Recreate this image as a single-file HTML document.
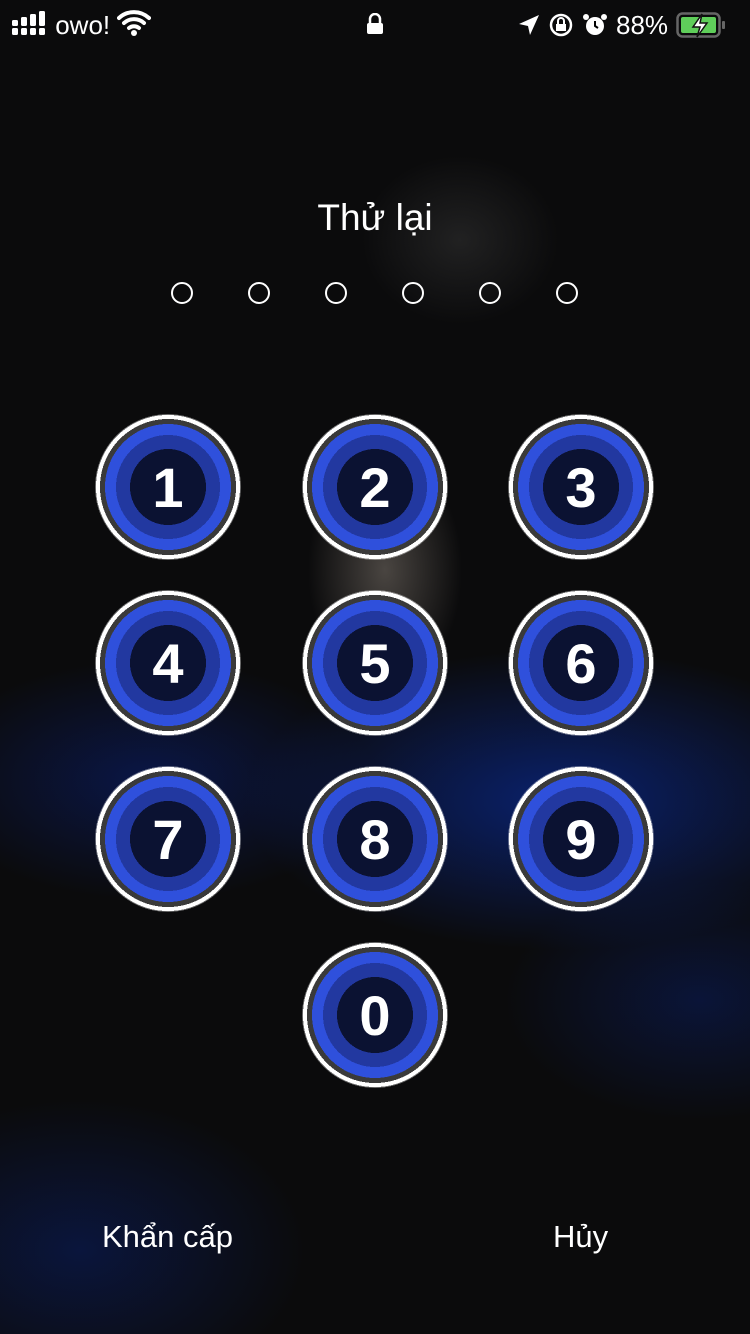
<!DOCTYPE html>
<html><head><meta charset="utf-8"><style>
body{margin:0;width:750px;height:1334px;overflow:hidden;font-family:"Liberation Sans",sans-serif;color:#fff;position:relative;
background:
radial-gradient(ellipse 110px 170px at 385px 570px,rgba(150,140,130,.45),transparent 70%),
radial-gradient(ellipse 140px 120px at 460px 240px,rgba(60,60,60,.45),transparent 70%),
radial-gradient(ellipse 420px 200px at 560px 800px,rgba(10,40,140,.75),transparent 75%),
radial-gradient(ellipse 300px 160px at 150px 780px,rgba(10,30,110,.6),transparent 75%),
radial-gradient(ellipse 300px 200px at 80px 1250px,rgba(10,30,100,.55),transparent 75%),
radial-gradient(ellipse 260px 160px at 700px 1000px,rgba(10,30,100,.5),transparent 75%),
#0b0b0c;}
.sb{position:absolute;top:8px;font-size:26px;line-height:34px}
.b{position:absolute;width:146px;height:146px;border-radius:50%;box-sizing:border-box;
background:radial-gradient(circle,#0b1232 0 38px,#2238a0 38px 52px,#2f50dc 52px 63px,#3a3a3a 63px 68px,#fff 68px 72px,rgba(255,255,255,.4) 72px 73px,transparent 73px);
display:flex;align-items:center;justify-content:center;font-size:56px;font-weight:bold;font-family:"Liberation Sans",sans-serif}
.d{position:absolute;top:282px;width:22px;height:22px;border:2px solid #fff;border-radius:50%;box-sizing:border-box}
.t{position:absolute;font-size:31px}
</style></head><body>
<div class="sb" style="left:12px">
<svg width="36" height="28" style="vertical-align:-4px"><g fill="#fff"><rect x="0" y="18" width="6" height="7" rx="1.5"/><rect x="9" y="18" width="6" height="7" rx="1.5"/><rect x="18" y="18" width="6" height="7" rx="1.5"/><rect x="27" y="18" width="6" height="7" rx="1.5"/><rect x="0" y="10" width="6" height="6" rx="1.5"/><rect x="9" y="7" width="6" height="9" rx="1.5"/><rect x="18" y="4" width="6" height="12" rx="1.5"/><rect x="27" y="1" width="6" height="15" rx="1.5"/></g></svg> owo!
<svg width="34" height="28" style="vertical-align:-2px" viewBox="0 0 34 28"><path d="M2 10a22 22 0 0 1 30 0M7 15a15 15 0 0 1 20 0M12 20a8 8 0 0 1 10 0" stroke="#fff" stroke-width="4" fill="none" stroke-linecap="round"/><circle cx="17" cy="25" r="3" fill="#fff"/></svg></div>
<svg style="position:absolute;left:366px;top:13px" width="18" height="22"><path d="M4 10V6a5 5 0 0 1 10 0v4" stroke="#fff" stroke-width="2.5" fill="none"/><rect x="1" y="10" width="16" height="11" rx="2" fill="#fff"/></svg>
<div class="sb" style="left:518px;display:flex;align-items:center;gap:8px">
<svg width="22" height="22"><path d="M21 1L1 10l9 2 2 9z" fill="#fff"/></svg>
<svg width="26" height="26"><circle cx="13" cy="13" r="10" stroke="#fff" stroke-width="2.5" fill="none"/><rect x="8" y="12" width="10" height="7" fill="#fff"/><path d="M10 12V9a3 3 0 0 1 6 0v3" stroke="#fff" stroke-width="2" fill="none"/></svg>
<svg width="26" height="26"><circle cx="13" cy="14" r="9" fill="#fff"/><path d="M13 9v5l3 2" stroke="#000" stroke-width="2" fill="none"/><circle cx="4" cy="5" r="3" fill="#fff"/><circle cx="22" cy="5" r="3" fill="#fff"/></svg>
<span>88%</span>
<svg width="52" height="28"><rect x="1.5" y="2.5" width="42" height="23" rx="5" stroke="#666" stroke-width="2.5" fill="none"/><rect x="5" y="6" width="35" height="16" rx="2" fill="#5fce5a"/><rect x="46" y="10" width="3" height="8" rx="1" fill="#666"/><path d="M26 3l-9 13h7l-3 10 10-14h-7z" fill="#fff" stroke="#111" stroke-width="1.5"/></svg></div>
<div class="t" style="left:0;width:750px;text-align:center;top:197px;font-size:37px">Thử lại</div>
<div class="d" style="left:171px"></div><div class="d" style="left:248px"></div><div class="d" style="left:325px"></div><div class="d" style="left:402px"></div><div class="d" style="left:479px"></div><div class="d" style="left:556px"></div>
<div class="b" style="left:95px;top:414px">1</div><div class="b" style="left:302px;top:414px">2</div><div class="b" style="left:508px;top:414px">3</div>
<div class="b" style="left:95px;top:590px">4</div><div class="b" style="left:302px;top:590px">5</div><div class="b" style="left:508px;top:590px">6</div>
<div class="b" style="left:95px;top:766px">7</div><div class="b" style="left:302px;top:766px">8</div><div class="b" style="left:508px;top:766px">9</div>
<div class="b" style="left:302px;top:942px">0</div>
<div class="t" style="left:102px;top:1219px">Khẩn cấp</div>
<div class="t" style="left:553px;top:1219px">Hủy</div>
</body></html>
